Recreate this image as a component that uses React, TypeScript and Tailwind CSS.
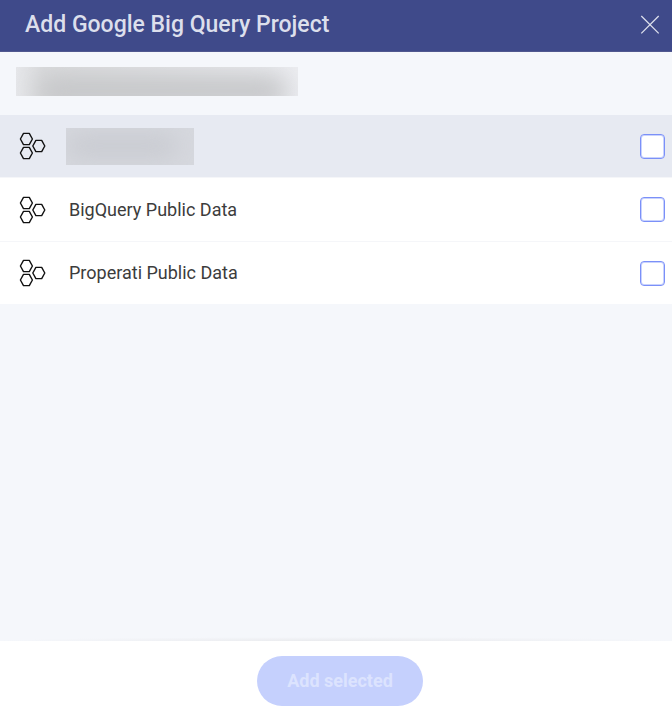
import { useState } from "react";

type Project = { id: string; name: string | null };

const projects: Project[] = [
  { id: "private", name: null },
  { id: "bigquery", name: "BigQuery Public Data" },
  { id: "properati", name: "Properati Public Data" },
];

function HexagonsIcon() {
  return (
    <svg
      className="h-7 w-7 shrink-0"
      viewBox="0 0 28 28"
      fill="none"
      stroke="#111111"
      strokeWidth="1.4"
      strokeLinejoin="round"
      aria-hidden="true"
    >
      <path d="M1.4 7 4.5 1.4h5.8L13.4 7l-3.1 5.6H4.5Z" />
      <path d="M1.4 21l3.1-5.6h5.8l3.1 5.6-3.1 5.6H4.5Z" />
      <path d="M13.8 14l3.1-5.6h5.8l3.1 5.6-3.1 5.6h-5.8Z" />
    </svg>
  );
}

function ProjectRow({ project }: { project: Project }) {
  const [checked, setChecked] = useState(false);
  const hidden = project.name === null;
  return (
    <li
      className={
        "flex h-16 items-center border-b border-[#f5f6f9] pr-[7px] pl-[19px] first:h-[63px] last:h-[62px] last:border-b-0 " +
        (hidden ? "bg-[#e7eaf2]" : "bg-white")
      }
    >
      <HexagonsIcon />
      {hidden ? (
        <span className="ml-[19px] h-[37px] w-32 overflow-hidden bg-[#d6d8de]">
          <span className="mt-2 block h-5 w-28 rounded-full bg-[#c6c8ce] blur-md" />
        </span>
      ) : (
        <label htmlFor={project.id} className="ml-[22px] text-lg text-[#3c3c3c]">
          {project.name}
        </label>
      )}
      <input
        id={project.id}
        type="checkbox"
        aria-label={hidden ? "Private project" : undefined}
        checked={checked}
        onChange={(e) => setChecked(e.target.checked)}
        className="ml-auto h-[25px] w-[25px] shrink-0 appearance-none rounded border border-[#7b90f8] bg-white inset-shadow-[0_0_0_1px_#c9d3fd] checked:bg-[#6f87f5]"
      />
    </li>
  );
}

export default function App() {
  return (
    <div className="flex min-h-screen flex-col bg-[#f5f7fb] font-['Roboto',sans-serif]">
      <header className="flex h-13 items-center justify-between border-b border-[#51588f] bg-[#3f4a8a] pr-3 pb-px pl-[25px]">
        <h1 className="text-[23px] leading-8 font-medium text-[#dcdfec]">
          Add Google Big Query Project
        </h1>
        <button type="button" aria-label="Close" className="text-[#dcdfec]">
          <svg className="h-5 w-5" viewBox="0 0 20 20" stroke="currentColor" strokeWidth="1.3">
            <path d="M1.3 1l17.4 17.4M18.7 1 1.3 18.4" />
          </svg>
        </button>
      </header>
      <main className="flex flex-1 flex-col">
        <div className="flex h-[63px] items-center px-4 pb-1">
          <div className="h-[29px] w-[282px] overflow-hidden bg-linear-to-r from-[#e6e7ea] via-[#dadbdd] via-10% to-[#ecedf1]">
            <div className="mt-2 ml-5 h-8 w-[252px] rounded-full bg-[#c5c6c8] blur-md" />
          </div>
        </div>
        <ul>
          {projects.map((project) => (
            <ProjectRow key={project.id} project={project} />
          ))}
        </ul>
        <div className="mt-auto h-1 bg-radial-[ellipse_50%_100%_at_50%_100%] from-[#eaebee] to-[#f5f7fb]" />
      </main>
      <footer className="flex justify-center bg-white pt-[15px] pb-[5px] pl-2">
        <button
          type="button"
          disabled
          className="h-[50px] w-[166px] rounded-full bg-[#c5d0fd] text-lg font-bold text-[#dce3fe]"
        >
          Add selected
        </button>
      </footer>
    </div>
  );
}
